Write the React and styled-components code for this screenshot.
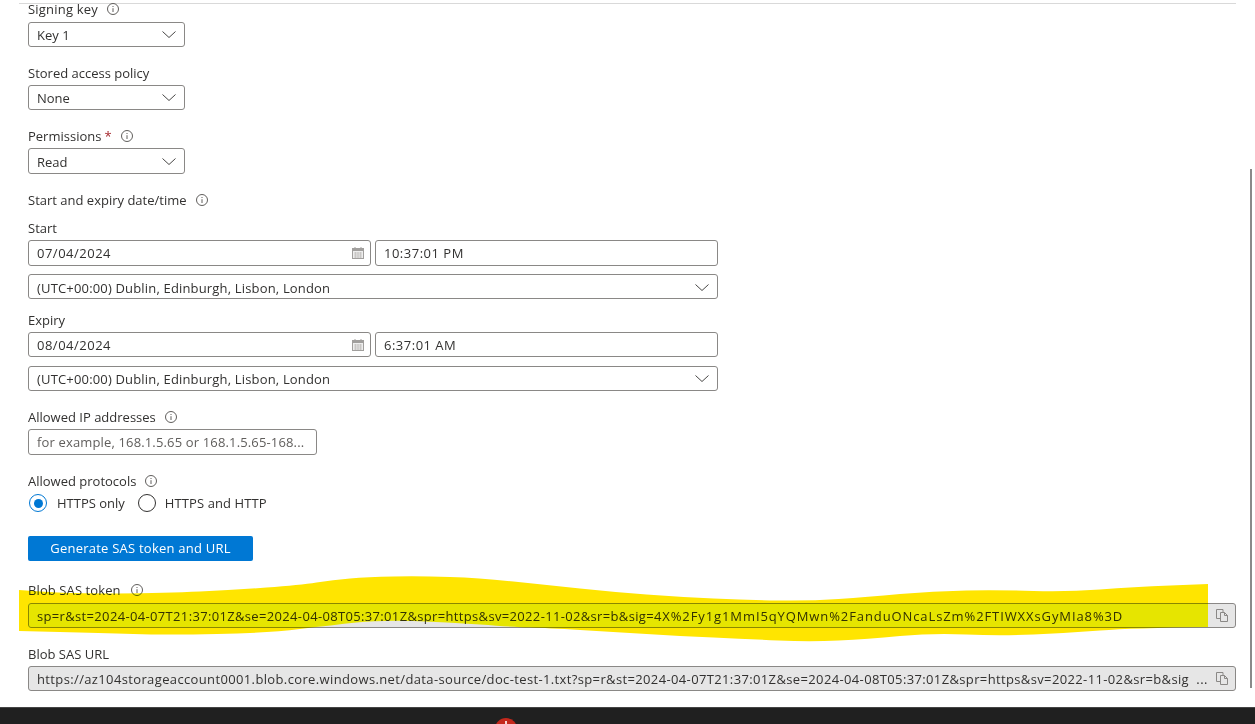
import React from "react";
import styled, { createGlobalStyle } from "styled-components";

const TOKEN_HEAD = "sp=r&st=2024-04-07T21:37:01Z&se=2024-04-08T05:37:01Z&spr=https&sv=2022-11-02&sr=b&sig=";
const TOKEN_TAIL = "4X%2Fy1g1MmI5qYQMwn%2FanduONcaLsZm%2FTIWXXsGyMIa8%3D";
const URL_TEXT =
  "https://az104storageaccount0001.blob.core.windows.net/data-source/doc-test-1.txt?sp=r&st=2024-04-07T21:37:01Z&se=2024-04-08T05:37:01Z&spr=https&sv=2022-11-02&sr=b&sig";

const TOP_EDGE = [
  [19, 590], [67, 594], [167, 593], [233, 590], [300, 585], [333, 580], [367, 577], [420, 576],
  [480, 578], [547, 585], [613, 592], [680, 597], [747, 600], [810, 601], [867, 597], [933, 591],
  [1000, 590], [1067, 592], [1133, 587], [1208, 584],
];
const BOTTOM_EDGE = [
  [1208, 627], [1133, 628], [1067, 633], [1000, 636], [933, 633], [867, 639], [810, 642], [747, 639],
  [680, 636], [613, 632], [547, 628], [513, 627], [447, 622], [380, 620], [333, 625], [267, 633],
  [167, 635], [100, 633], [19, 631],
];

// runs a curve through the midpoints so the marker stroke has no corners along its edges
const smooth = (points) => {
  let d = `L${points[0][0]} ${points[0][1]}`;
  for (let i = 1; i < points.length - 1; i++) {
    const [x, y] = points[i];
    const [nx, ny] = points[i + 1];
    d += ` Q${x} ${y} ${(x + nx) / 2} ${(y + ny) / 2}`;
  }
  const last = points[points.length - 1];
  return d + ` L${last[0]} ${last[1]}`;
};
const MARKER = `M19 590 ${smooth(TOP_EDGE)} ${smooth(BOTTOM_EDGE)} Z`;

const GlobalStyle = createGlobalStyle`
  html, body {
    margin: 0;
    padding: 0;
    background: #fff;
  }
  body {
    font-family: "Open Sans", "Noto Sans", "Liberation Sans", sans-serif;
    font-size: 13px;
    color: #323130;
  }
`;

const Page = styled.div`
  position: relative;
  width: 1255px;
  height: 724px;
  overflow: hidden;
  background: #fff;
`;

const Main = styled.main`
  height: 707px;
  padding-top: 3px;
  box-sizing: border-box;
`;

const HeaderLine = styled.div`
  width: 1217px;
  height: 1px;
  margin-left: 19px;
  background: #d9d9d9;
`;

const Form = styled.div`
  margin-top: -4px;
  padding-left: 28px;
  width: 1236px;
  box-sizing: border-box;
`;

const Field = styled.div`
  margin-top: ${(p) => p.$top || 0}px;
`;

const Label = styled.div`
  display: flex;
  align-items: center;
  height: 18px;
  margin-bottom: ${(p) => p.$gap ?? 3}px;
  line-height: 18px;
  white-space: nowrap;
  letter-spacing: ${(p) => p.$spacing || 0}px;
`;

const Required = styled.span`
  margin-left: 3px;
  color: #a4262c;
`;

const InfoMark = styled.svg`
  margin-left: ${(p) => p.$left}px;
  flex: none;
`;

const Box = styled.div`
  display: flex;
  align-items: center;
  box-sizing: border-box;
  width: ${(p) => p.$width || "100%"};
  height: ${(p) => p.$height || 25}px;
  margin-top: ${(p) => p.$top || 0}px;
  padding: ${(p) => p.$low || 0}px 8px 0;
  border: 1px solid #8a8886;
  border-radius: 3px;
  background: ${(p) => (p.$disabled ? "#e6e6e6" : "#fff")};
  white-space: nowrap;
`;

const BoxText = styled.span`
  flex: 1;
  min-width: 0;
  color: ${(p) => (p.$placeholder ? "#605e5c" : "#323130")};
  letter-spacing: ${(p) => p.$spacing || 0}px;
`;

const Spaced = styled.span`
  letter-spacing: ${(p) => p.$spacing}px;
`;

const Ellipsis = styled.span`
  margin-right: 8px;
  letter-spacing: 0.5px;
`;

const DateRow = styled.div`
  display: flex;
  gap: 4px;
  width: 690px;
`;

const Protocols = styled.div`
  display: flex;
  align-items: center;
  height: 20px;
  margin-left: 1px;
`;

const RadioDot = styled.span`
  display: flex;
  align-items: center;
  justify-content: center;
  flex: none;
  box-sizing: border-box;
  width: 18px;
  height: 18px;
  border: 1.5px solid ${(p) => (p.$checked ? "#0078d4" : "#323130")};
  border-radius: 50%;
  &::after {
    content: "";
    display: ${(p) => (p.$checked ? "block" : "none")};
    width: 9px;
    height: 9px;
    border-radius: 50%;
    background: #0078d4;
  }
`;

const RadioText = styled.span`
  margin: 0 13px 0 ${(p) => p.$left}px;
  letter-spacing: ${(p) => p.$spacing || 0}px;
`;

const GenerateButton = styled.button`
  display: block;
  width: 225px;
  height: 25px;
  margin-top: 23px;
  padding: 0 0 2px;
  border: 0;
  border-radius: 2px;
  background: #0078d4;
  color: #fff;
  font: inherit;
  font-weight: 500;
  letter-spacing: 0.23px;
`;

const ActionIcon = styled.svg`
  flex: none;
  margin-right: ${(p) => p.$right || 0}px;
`;

const Taskbar = styled.footer`
  position: relative;
  height: 17px;
  box-sizing: border-box;
  border-top: 1px solid #454545;
  background: #202020;
  overflow: hidden;
`;

const TaskbarBadge = styled.span`
  position: absolute;
  left: 495px;
  top: 10px;
  width: 22px;
  height: 22px;
  border-radius: 50%;
  background: #c4281c;
  &::after {
    content: "";
    position: absolute;
    left: 10px;
    top: 3px;
    width: 2px;
    height: 6px;
    background: #f4d6d2;
  }
`;

const ScrollThumb = styled.div`
  position: absolute;
  left: 1250px;
  top: 169px;
  width: 2px;
  height: 519px;
  background: #8a8a8a;
`;

const Marker = styled.svg`
  position: absolute;
  left: 0;
  top: 0;
  mix-blend-mode: darken;
  pointer-events: none;
`;

const Info = ({ left = 9 }) => (
  <InfoMark $left={left} width="12" height="12" viewBox="0 0 12 12" fill="none">
    <circle cx="6" cy="6" r="5.5" stroke="#605e5c" />
    <path d="M6 5.2V9" stroke="#605e5c" />
    <path d="M6 3v1" stroke="#605e5c" />
  </InfoMark>
);

const Chevron = () => (
  <ActionIcon width="14" height="7" viewBox="0 0 14 7" fill="none">
    <path d="M.5.5l6.5 6 6.5-6" stroke="#323130" strokeWidth="0.9" />
  </ActionIcon>
);

const Calendar = () => (
  <ActionIcon $right={-2} width="12" height="12" viewBox="0 0 12 12" fill="none">
    <rect x="0.5" y="1.5" width="11" height="10" fill="#eeeeee" stroke="#a19f9d" />
    <rect x="1" y="2" width="10" height="2" fill="#a19f9d" />
    <path d="M2 6h8M2 8h8M2 10h8M3.5 5v6M6 5v6M8.5 5v6" stroke="#c8c6c4" />
    <path d="M3 0v2M9 0v2" stroke="#a19f9d" />
  </ActionIcon>
);

const Copy = () => (
  <ActionIcon $right={-1} width="12" height="13" viewBox="0 0 12 13" fill="none">
    <path d="M7 3V.5H.5v9H4" stroke="#8a8886" />
    <path d="M4.5 3.5h4l3 3v6h-7zM8.5 3.5v3h3" stroke="#8a8886" fill="#e6e6e6" />
  </ActionIcon>
);

const Select = ({ value, width, height, top, low, spacing }) => (
  <Box $width={width} $height={height} $top={top} $low={low}>
    <BoxText $spacing={spacing}>{value}</BoxText>
    <Chevron />
  </Box>
);

export default function App() {
  return (
    <Page>
      <GlobalStyle />
      <Main>
        <HeaderLine />
        <Form>
          <Field>
            <Label $gap={4} $spacing={0.2}>Signing key<Info /></Label>
            <Select value="Key 1" width="157px" />
          </Field>
          <Field $top={17}>
            <Label>Stored access policy</Label>
            <Select value="None" width="157px" />
          </Field>
          <Field $top={17}>
            <Label>Permissions<Required>*</Required><Info /></Label>
            <Select value="Read" width="157px" height={26} low={1} />
          </Field>
          <Field $top={17}>
            <Label $gap={10}>Start and expiry date/time<Info /></Label>
          </Field>
          <Field>
            <Label>Start</Label>
            <DateRow>
              <Box $width="343px" $height={26}><BoxText $spacing={0.5}>07/04/2024</BoxText><Calendar /></Box>
              <Box $width="343px" $height={26}><BoxText $spacing={0.5}>10:37:01 PM</BoxText></Box>
            </DateRow>
            <Select value="(UTC+00:00) Dublin, Edinburgh, Lisbon, London" width="690px" top={8} low={2} spacing={0.17} />
          </Field>
          <Field $top={12}>
            <Label>Expiry</Label>
            <DateRow>
              <Box $width="343px"><BoxText $spacing={0.5}>08/04/2024</BoxText><Calendar /></Box>
              <Box $width="343px"><BoxText $spacing={0.5}>6:37:01 AM</BoxText></Box>
            </DateRow>
            <Select value="(UTC+00:00) Dublin, Edinburgh, Lisbon, London" width="690px" top={9} spacing={0.17} />
          </Field>
          <Field $top={17}>
            <Label>Allowed IP addresses<Info /></Label>
            <Box $width="289px" $height={26}>
              <BoxText $placeholder $spacing={0.15}>for example, 168.1.5.65 or 168.1.5.65-168...</BoxText>
            </Box>
          </Field>
          <Field $top={17}>
            <Label $gap={3}>Allowed protocols<Info /></Label>
            <Protocols>
              <RadioDot $checked />
              <RadioText $left={10}>HTTPS only</RadioText>
              <RadioDot />
              <RadioText $left={9} $spacing={0.1}>HTTPS and HTTP</RadioText>
            </Protocols>
            <GenerateButton>Generate SAS token and URL</GenerateButton>
          </Field>
          <Field $top={20}>
            <Label $gap={4} $spacing={0.1}>Blob SAS token<Info left={10} /></Label>
            <Box $disabled>
              <BoxText>
                <Spaced $spacing={0.34}>{TOKEN_HEAD}</Spaced>
                <Spaced $spacing={0.9}>{TOKEN_TAIL}</Spaced>
              </BoxText>
              <Copy />
            </Box>
          </Field>
          <Field $top={17}>
            <Label>Blob SAS URL</Label>
            <Box $disabled>
              <BoxText $spacing={0.365}>{URL_TEXT}</BoxText>
              <Ellipsis>...</Ellipsis>
              <Copy />
            </Box>
          </Field>
        </Form>
      </Main>
      <Taskbar>
        <TaskbarBadge />
      </Taskbar>
      <ScrollThumb />
      <Marker width="1255" height="724" viewBox="0 0 1255 724">
        <path d={MARKER} fill="#ffe500" />
      </Marker>
    </Page>
  );
}
